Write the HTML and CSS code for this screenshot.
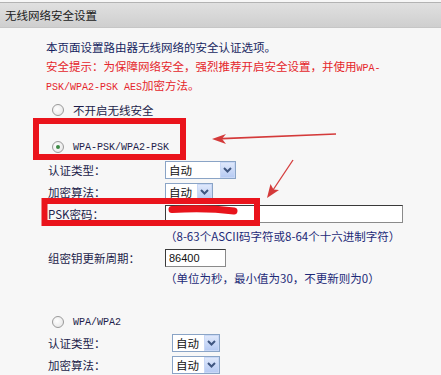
FILE: index.html
```html
<!DOCTYPE html>
<html lang="zh-CN">
<head>
    <meta charset="UTF-8">
    <title>无线网络安全设置</title>
    <link rel="stylesheet" href="styles.css">
</head>
<body>

    <div class="title">无线网络安全设置</div>

    <div class="content">
        <p class="intro">本页面设置路由器无线网络的安全认证选项。</p>
        <p class="warn">安全提示：为保障网络安全，强烈推荐开启安全设置，并使用<span class="mono">WPA-</span><br><span class="mono">PSK/WPA2-PSK AES</span>加密方法。</p>

        <!-- 不开启 -->
        <div class="opt opt-first"><span class="radio"></span>不开启无线安全</div>

        <!-- WPA-PSK/WPA2-PSK -->
        <div class="opt opt-psk"><span class="radio on"></span><span class="mono">WPA-PSK/WPA2-PSK</span></div>
        <div class="row row-first">
            <span class="lbl">认证类型：</span>
            <span class="sel">自动<i class="btn"><svg width="11" height="8" viewBox="0 0 11 8"><path d="M2 2 L5.5 5.5 L9 2" fill="none" stroke="#3f5680" stroke-width="2"/></svg></i></span>
        </div>
        <div class="row">
            <span class="lbl">加密算法：</span>
            <span class="sel small">自动<i class="btn"><svg width="11" height="8" viewBox="0 0 11 8"><path d="M2 2 L5.5 5.5 L9 2" fill="none" stroke="#3f5680" stroke-width="2"/></svg></i></span>
        </div>
        <div class="row">
            <span class="lbl">PSK密码：</span>
            <span class="field"></span>
        </div>
        <div class="hint hint-psk">（8-63个ASCII码字符或8-64个十六进制字符）</div>
        <div class="row">
            <span class="lbl">组密钥更新周期：</span>
            <span class="field short">86400</span>
        </div>
        <div class="hint hint-period">（单位为秒，最小值为30，不更新则为0）</div>

        <!-- WPA/WPA2 -->
        <div class="opt opt-wpa"><span class="radio"></span><span class="mono">WPA/WPA2</span></div>
        <div class="row">
            <span class="lbl wide">认证类型：</span>
            <span class="sel small">自动<i class="btn"><svg width="11" height="8" viewBox="0 0 11 8"><path d="M2 2 L5.5 5.5 L9 2" fill="none" stroke="#3f5680" stroke-width="2"/></svg></i></span>
        </div>
        <div class="row">
            <span class="lbl wide">加密算法：</span>
            <span class="sel small">自动<i class="btn"><svg width="11" height="8" viewBox="0 0 11 8"><path d="M2 2 L5.5 5.5 L9 2" fill="none" stroke="#3f5680" stroke-width="2"/></svg></i></span>
        </div>
    </div>

    <!-- red annotations drawn over the screenshot -->
    <svg class="marks" width="441" height="375" viewBox="0 0 441 375">
        <rect x="36" y="121" width="147" height="36" fill="none" stroke="#ea141c" stroke-width="6"/>
        <rect x="44.5" y="201" width="212.5" height="22" fill="none" stroke="#ea141c" stroke-width="6"/>
        <path d="M172 209.5 C195 208 215 208.5 234 211" fill="none" stroke="#e8141c" stroke-width="7" stroke-linecap="round"/>
        <line x1="336" y1="134" x2="222" y2="138.6" stroke="#d43a3a" stroke-width="1.6"/>
        <polygon points="212,139 226,134 222,138.7 226,144" fill="#d43a3a"/>
        <line x1="293" y1="160" x2="273" y2="190" stroke="#d43a3a" stroke-width="1.3"/>
        <polygon points="267,198 279,190 273.5,189.5 270.5,184" fill="#d43a3a"/>
    </svg>

</body>
</html>
```

FILE: styles.css
```css
body {
    margin: 0;
    position: relative;
    height: 375px;
    overflow: hidden;
    background-color: #f7f7f7;
    font-family: "Noto Sans CJK SC", sans-serif;
    font-size: 11.5px;
    color: #1c1d4a;
}
.mono {
    font-family: "Liberation Mono", monospace;
    font-size: 10px;
}
.title {
    margin-top: 2px;
    height: 24px;
    line-height: 24px;
    padding-left: 5px;
    border-top: 1px solid #b3b3b3;
    border-bottom: 1px solid #c6c6c6;
    background: linear-gradient(#e0e0e0, #cfcfcf);
    color: #1a1a1a;
}
.content {
    padding-left: 46px;
    padding-top: 10px;
}
.intro {
    margin: 0;
    line-height: 18px;
    color: #161f60;
}
.warn {
    margin: 2px 0 0;
    line-height: 17px;
    color: #e5262b;
}
.opt {
    display: flex;
    align-items: center;
    height: 20px;
    padding-left: 6px;
}
.opt-first {
    margin-top: 4px;
}
.opt-psk {
    margin-top: 17px;
}
.opt-wpa {
    margin-top: 25px;
}
.radio {
    position: relative;
    width: 12px;
    height: 12px;
    margin-right: 9px;
    box-sizing: border-box;
    border: 1px solid #9a9a9a;
    border-radius: 50%;
    background: radial-gradient(circle at 40% 40%, #ffffff, #e2e2e2);
}
.radio.on::after {
    content: "";
    position: absolute;
    left: 3px;
    top: 3px;
    width: 4px;
    height: 4px;
    border-radius: 50%;
    background-color: #3d8a45;
}
.row {
    display: flex;
    align-items: center;
    height: 22px;
}
.row-first {
    margin-top: 2px;
}
.lbl {
    width: 119px;
    padding-left: 2px;
    box-sizing: border-box;
}
.lbl.wide {
    width: 126px;
}
.sel {
    display: flex;
    align-items: center;
    justify-content: space-between;
    width: 71px;
    height: 18px;
    box-sizing: border-box;
    padding-left: 3px;
    border: 1px solid #8aa4c6;
    background-color: #ffffff;
    color: #111111;
}
.sel.small {
    width: 48px;
}
.sel .btn {
    display: flex;
    align-items: center;
    justify-content: center;
    width: 15px;
    height: 16px;
    box-sizing: border-box;
    border: 1px solid #c9d8f6;
    background: linear-gradient(#dfe8fb, #b7cbf3);
}
.field {
    display: flex;
    align-items: center;
    width: 238px;
    height: 18px;
    box-sizing: border-box;
    border: 1px solid #3a3a3a;
    border-right-color: #8a8a8a;
    border-bottom-color: #8a8a8a;
    background-color: #ffffff;
}
.field.short {
    width: 61px;
    padding-left: 3px;
    font-family: "Liberation Sans", sans-serif;
    font-size: 11px;
    color: #111111;
}
.hint {
    margin-left: 119px;
    color: #1d2a78;
}
.hint-psk {
    line-height: 22px;
}
.hint-period {
    line-height: 18px;
}
.marks {
    position: absolute;
    left: 0;
    top: 0;
    pointer-events: none;
}
```
